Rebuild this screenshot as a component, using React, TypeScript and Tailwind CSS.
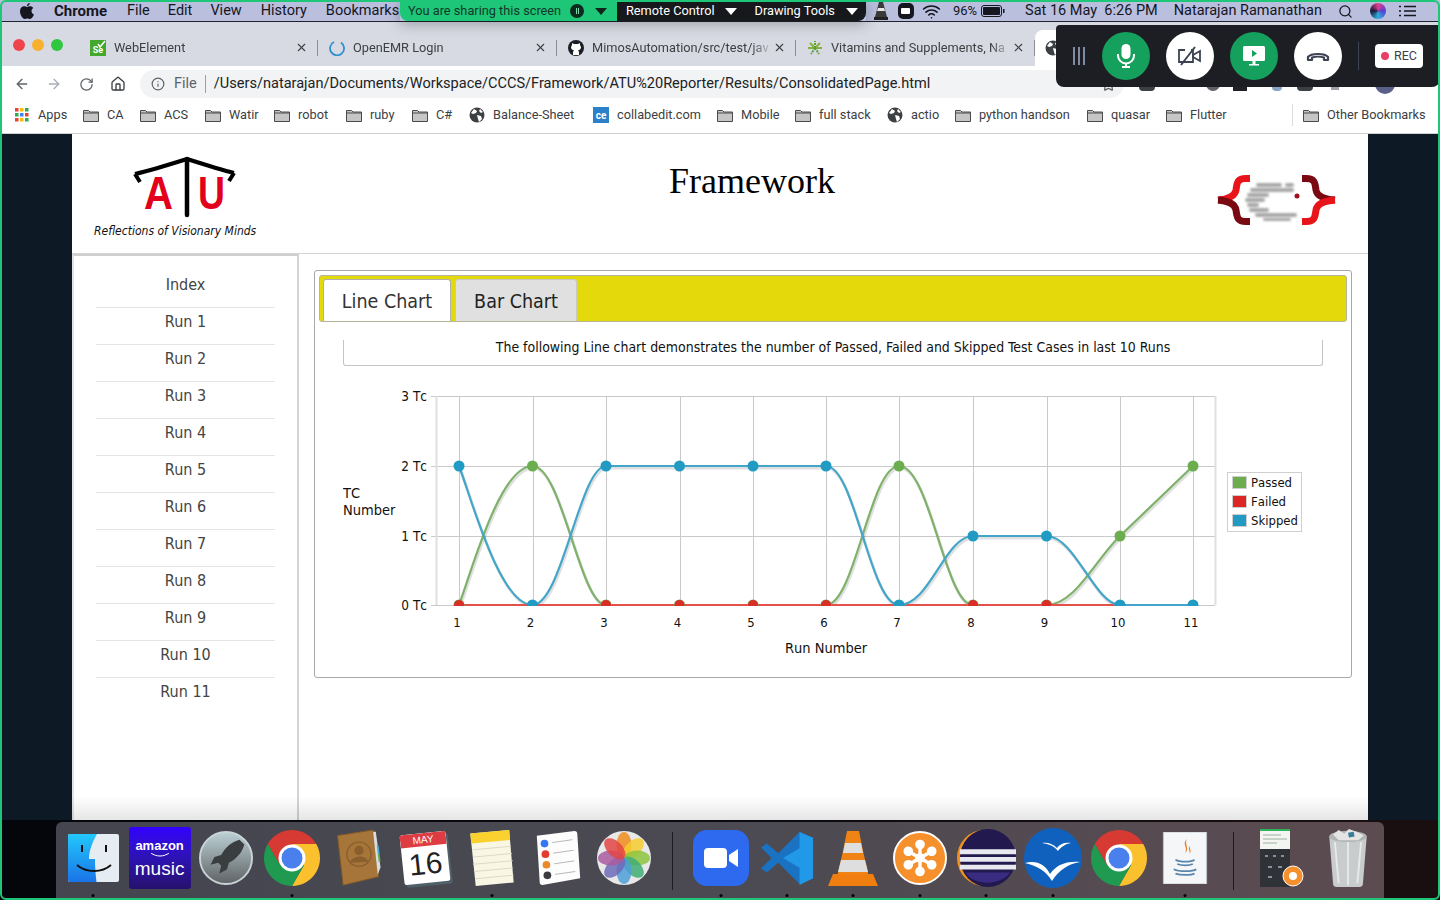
import { ArrowLeft, ArrowRight, Home, Info, RotateCw, Search, Star, Wifi, X } from 'lucide-react';

const pageFont = "font-['DejaVu_Sans_Condensed','DejaVu_Sans',sans-serif]";

const runs = ['Index', 'Run 1', 'Run 2', 'Run 3', 'Run 4', 'Run 5', 'Run 6', 'Run 7', 'Run 8', 'Run 9', 'Run 10', 'Run 11'];

const bookmarks = [
  { label: 'CA', width: 'w-[57px]' },
  { label: 'ACS', width: 'w-[65px]' },
  { label: 'Watir', width: 'w-[69px]' },
  { label: 'robot', width: 'w-[72px]' },
  { label: 'ruby', width: 'w-[66px]' },
  { label: 'C#', width: 'w-[57px]' },
  { label: 'Balance-Sheet', width: 'w-[124px]', icon: 'globe' },
  { label: 'collabedit.com', width: 'w-[124px]', icon: 'ce' },
  { label: 'Mobile', width: 'w-[78px]' },
  { label: 'full stack', width: 'w-[92px]' },
  { label: 'actio', width: 'w-[68px]', icon: 'globe' },
  { label: 'python handson', width: 'w-[132px]' },
  { label: 'quasar', width: 'w-[79px]' },
  { label: 'Flutter', width: 'w-[126px]' },
];

function Folder() {
  return (
    <svg width="16" height="13" viewBox="0 0 16 13" className="shrink-0">
      <path d="M.5 1.5h5l1.5 1.5h8.500v9.500h-15z" fill="#c6c6c6" stroke="#4a4a4a" />
      <path d="M.5 4h15" stroke="#4a4a4a" />
    </svg>
  );
}

function GlobeIcon({ size = 16 }: { size?: number }) {
  return (
    <svg width={size} height={size} viewBox="0 0 16 16" className="shrink-0">
      <circle cx="8" cy="8" r="7.500" fill="#3c4043" />
      <path d="M5 2l3 2-1 2-3 1-2-1zM8 8l4 1 1 3-3 3-1-3zM11 2l3 3-2 1-2-2z" fill="#fff" />
    </svg>
  );
}

function BookmarkBar() {
  return (
    <div className="flex h-[33px] items-center bg-white pb-[3px] pl-[14px] text-[12.75px] text-[#3c4043]">
      <div className="flex w-[69px] items-center gap-2">
        <svg width="16" height="16" viewBox="0 0 16 16" className="shrink-0">
          {[1, 6, 11].map((x, i) =>
            [1, 6, 11].map((y, j) => (
              <rect key={`${i}-${j}`} x={x} y={y} width="3.500" height="3.500" fill={['#ea4335', '#fbbc05', '#34a853', '#4285f4'][(i + j * 2) % 4]} />
            )),
          )}
        </svg>
        <span>Apps</span>
      </div>
      {bookmarks.map((b) => (
        <div key={b.label} className={`flex items-center gap-2 ${b.width}`}>
          {b.icon === 'globe' ? (
            <GlobeIcon />
          ) : b.icon === 'ce' ? (
            <span className="flex h-4 w-4 shrink-0 items-center justify-center bg-[#2a80c9] text-[10px] font-bold text-white">ce</span>
          ) : (
            <Folder />
          )}
          <span className="whitespace-nowrap">{b.label}</span>
        </div>
      ))}
      <div className="mr-[10px] h-[22px] w-px bg-[#dadce0]" />
      <div className="flex items-center gap-2">
        <Folder />
        <span className="whitespace-nowrap">Other Bookmarks</span>
      </div>
    </div>
  );
}

function Tab({ title, children }: { title: string; children: React.ReactNode }) {
  return (
    <div className="flex h-[16px] w-[239px] items-center border-r border-[#8a8d94] pl-[11px] pr-[9px] text-[12.75px] text-[#3c4043]">
      <span className="flex w-4 shrink-0 justify-center">{children}</span>
      <span className="ml-[8px] flex-1 whitespace-nowrap [mask-image:linear-gradient(to_right,black_88%,transparent)]">{title}</span>
      <X size={13} strokeWidth={2} className="shrink-0 text-[#3c4043]" />
    </div>
  );
}

function TabStrip() {
  return (
    <div className="flex h-[44px] bg-[#d7dae3]">
      <div className="flex w-[79px] items-center gap-[7px] pl-[13px] pt-[1px]">
        <span className="h-3 w-3 rounded-full bg-[#f0444c]" />
        <span className="h-3 w-3 rounded-full bg-[#f8b02f]" />
        <span className="h-3 w-3 rounded-full bg-[#2fc640]" />
      </div>
      <div className="flex items-center pt-[7px]">
        <Tab title="WebElement">
          <span className="relative flex h-4 w-4 items-end justify-center bg-[#43a82c] text-[9px] font-bold leading-[11px] text-white">
            Se
            <svg width="9" height="8" viewBox="0 0 9 8" className="absolute right-0 top-0">
              <path d="M1 4l2 3 5-6" fill="none" stroke="#fff" strokeWidth="1.500" />
            </svg>
          </span>
        </Tab>
        <Tab title="OpenEMR Login">
          <svg width="16" height="16" viewBox="0 0 16 16">
            <path d="M5 2a7 7 0 1 0 7 .5" fill="none" stroke="#2f8fd0" strokeWidth="1.800" />
          </svg>
        </Tab>
        <Tab title="MimosAutomation/src/test/jav">
          <svg width="16" height="16" viewBox="0 0 16 16">
            <circle cx="8" cy="8" r="8" fill="#1b1f23" />
            <path d="M5 15v-3l1-1.500c-2-.5-3-1.500-3-3.500l1-2V3l2 1h4l2-1v2l1 2c0 2-1 3-3 3.500l1 1.500v3z" fill="#fff" />
          </svg>
        </Tab>
        <Tab title="Vitamins and Supplements, Na">
          <svg width="16" height="16" viewBox="0 0 16 16" fill="none" strokeWidth="2">
            <path d="M8 8L3 3M8 8l5-5M8 8L1 8M8 8h7" stroke="#86b03a" />
            <path d="M8 8L4 14M8 8l4 6M8 8V1" stroke="#5a9e3a" strokeDasharray="2 1" />
          </svg>
        </Tab>
      </div>
      <div className="mt-[8px] flex w-[190px] items-center rounded-t-lg bg-white pl-[10px]">
        <GlobeIcon />
      </div>
    </div>
  );
}

function Toolbar() {
  return (
    <div className="flex h-[34px] items-center bg-white pl-[14px] pt-[2px] text-[#5f6368]">
      <ArrowLeft size={16} />
      <ArrowRight size={16} className="ml-[16px] text-[#a9adb3]" />
      <RotateCw size={15} className="ml-[17px]" />
      <Home size={16} className="ml-[16px] text-[#3c4043]" />
      <div className="ml-[14px] flex h-[28px] w-[984px] items-center rounded-full bg-[#f1f3f4] pl-[11px] text-[14.55px]">
        <Info size={14} />
        <span className="ml-[9px] text-[#5f6368]">File</span>
        <span className="ml-[8px] h-[18px] w-px bg-[#9aa0a6]" />
        <span className="ml-[8px] whitespace-nowrap text-[#202124]">/Users/natarajan/Documents/Workspace/CCCS/Framework/ATU%20Reporter/Results/ConsolidatedPage.html</span>
        <Star size={15} className="ml-auto mr-[8px] text-[#5f6368]" />
      </div>
      <span className="ml-[15px] h-[14px] w-[16px] rounded-sm bg-[#3c4043]" />
      <span className="ml-[23px] h-[4px] w-[4px] rounded-full bg-[#9aa0a6]" />
      <span className="ml-[24px] h-[14px] w-[14px] rounded-full bg-[#5f6368]" />
      <span className="ml-[13px] h-[14px] w-[14px] bg-[#202124]" />
      <span className="ml-[25px] h-[14px] w-[10px] rounded-sm bg-[#8aa4c8]" />
      <span className="ml-[15px] h-[14px] w-[16px] rounded-sm bg-[#3c4043]" />
      <span className="ml-[18px] h-[12px] w-[8px] bg-[#a0a4aa]" />
      <span className="ml-[36px] h-[20px] w-[20px] rounded-full bg-[#5a5f8a]" />
      <span className="ml-[21px] h-[4px] w-[4px] rounded-full bg-[#5f6368]" />
    </div>
  );
}

function MenuBar() {
  return (
    <div className="flex h-[22px] items-center border-b border-[#20222e] bg-[#b9bfdd] pt-[1px] font-['Roboto',sans-serif] text-[14.5px] text-[#15161f]">
      <svg width="14" height="16" viewBox="0 0 14 16" className="ml-[20px]">
        <path d="M9.800 0c.1 1.300-1.100 3-2.900 3C6.800 1.500 8.200.2 9.800 0zM7 4c.8 0 1.700-.7 3.100-.7 1.200 0 2.500.6 3.200 1.800-2.700 1.600-2.200 5.300.7 6.400-.8 2-2.400 4.500-3.900 4.500-1 0-1.500-.6-2.700-.6s-1.800.6-2.700.6C2.700 16 0 11.700 0 8.300 0 5 2.100 3.300 4 3.300 5.300 3.300 6.200 4 7 4z" fill="#15161f" />
      </svg>
      <span className="ml-[20px] text-[15px] font-bold">Chrome</span>
      <span className="ml-[20px]">File</span>
      <span className="ml-[18px]">Edit</span>
      <span className="ml-[18px]">View</span>
      <span className="ml-[19px]">History</span>
      <span className="ml-[19px]">Bookmarks</span>
      <div className="ml-auto flex items-center pr-[24px]">
        <svg width="14" height="18" viewBox="0 0 14 18">
          <path d="M5 0h4l4 15H1z" fill="#3a3a3a" />
          <path d="M4 6h6l1 3H3z" fill="#e8e8e8" />
          <path d="M0 15h14v3H0z" fill="#222" />
        </svg>
        <span className="ml-[10px] flex h-4 w-4 items-center justify-center rounded-[5px] bg-[#15161f]">
          <span className="h-[6px] w-[9px] rounded-[1px] bg-white" />
        </span>
        <Wifi size={19} className="ml-[8px]" />
        <span className="ml-[12px] text-[13px]">96%</span>
        <svg width="24" height="12" viewBox="0 0 24 12" className="ml-[4px]">
          <rect x=".5" y=".5" width="20" height="11" rx="2.500" fill="none" stroke="#15161f" />
          <rect x="2" y="2" width="17" height="8" rx="1" fill="#15161f" />
          <rect x="22" y="4" width="1.500" height="4" fill="#15161f" />
        </svg>
        <span className="ml-[20px]">Sat 16 May&nbsp;&nbsp;6:26 PM</span>
        <span className="ml-[16px]">Natarajan Ramanathan</span>
        <Search size={15} className="ml-[16px]" />
        <span className="ml-[17px] h-4 w-4 rounded-full bg-[conic-gradient(#e23f8e,#5a3fd0,#2fb0e0,#1a1a3a,#e23f8e)]" />
        <svg width="17" height="12" viewBox="0 0 17 12" className="ml-[13px]" stroke="#15161f" strokeWidth="1.500">
          <path d="M0 1.500h2M5 1.500h12M0 6h2M5 6h12M0 10.500h2M5 10.500h12" />
        </svg>
      </div>
    </div>
  );
}

function ShareBar() {
  return (
    <div className="absolute left-[400px] top-0 flex h-[21px] shadow-[0_3px_14px_rgba(0,0,0,0.28)] font-['Roboto',sans-serif] text-[12.75px]">
      <div className="flex w-[217px] items-center rounded-bl-lg bg-[#1ec677] pl-[8px] pt-[1px] text-[#14382a]">
        <span className="whitespace-nowrap">You are sharing this screen</span>
        <span className="ml-[9px] flex h-[14px] w-[14px] items-center justify-center gap-px rounded-full bg-[#0c2a1e]">
          <span className="h-[6px] w-px bg-[#7fd9ae]" />
          <span className="h-[6px] w-px bg-[#7fd9ae]" />
        </span>
        <span className="ml-[11px] h-0 w-0 border-x-[6px] border-t-[7px] border-x-transparent border-t-[#10241b]" />
      </div>
      <div className="flex w-[249px] items-center rounded-br-lg bg-[#17181b] pl-[9px] pt-[1px] text-white">
        <span className="whitespace-nowrap">Remote Control</span>
        <span className="ml-[10px] h-0 w-0 border-x-[6px] border-t-[7px] border-x-transparent border-t-white" />
        <span className="ml-[18px] whitespace-nowrap">Drawing Tools</span>
        <span className="ml-[11px] h-0 w-0 border-x-[6px] border-t-[7px] border-x-transparent border-t-white" />
      </div>
    </div>
  );
}

function MeetBar() {
  return (
    <div className="absolute left-[1056px] top-[25px] flex h-[62px] w-[384px] items-center rounded-b-lg rounded-tl-sm bg-[#1c1e23] pl-[17px]">
      <div className="flex gap-[3px]">
        <span className="h-[18px] w-[2px] bg-[#7f8ba3]" />
        <span className="h-[18px] w-[2px] bg-[#7f8ba3]" />
        <span className="h-[18px] w-[2px] bg-[#7f8ba3]" />
      </div>
      <button className="ml-[17px] flex h-[48px] w-[48px] items-center justify-center rounded-full bg-[#16a05d]">
        <svg width="20" height="24" viewBox="0 0 20 24">
          <rect x="5.500" y="0" width="9" height="15" rx="4.500" fill="#fff" />
          <path d="M2 10v1.500a8 8 0 0 0 16 0V10" fill="none" stroke="#fff" strokeWidth="2" />
          <path d="M10 19.500V22M6 23h8" stroke="#fff" strokeWidth="2" />
        </svg>
      </button>
      <button className="ml-[16px] flex h-[48px] w-[48px] items-center justify-center rounded-full bg-white">
        <svg width="24" height="20" viewBox="0 0 24 20" fill="none" stroke="#3c4352" strokeWidth="1.800">
          <path d="M7 4H1v12h14V4h-2" />
          <path d="M15 9l7-4v10l-7-4z" />
          <path d="M17 1L3 19" strokeWidth="2" />
        </svg>
      </button>
      <button className="ml-[16px] flex h-[48px] w-[48px] items-center justify-center rounded-full bg-[#16a05d]">
        <svg width="24" height="22" viewBox="0 0 24 22">
          <rect x="1" y="1" width="22" height="15" rx="1.500" fill="#fff" />
          <path d="M10 5l5 3.500-5 3.500z" fill="#16a05d" />
          <rect x="10.500" y="16" width="3" height="3" fill="#fff" />
          <rect x="7" y="19" width="10" height="1.500" fill="#fff" />
        </svg>
      </button>
      <button className="ml-[16px] flex h-[48px] w-[48px] items-center justify-center rounded-full bg-white">
        <svg width="24" height="12" viewBox="0 0 24 12" fill="none" stroke="#3c4352" strokeWidth="2.200">
          <path d="M2 10V7c3-4 17-4 20 0v3h-4V7.500c-3-1-9-1-12 0V10z" strokeLinejoin="round" />
        </svg>
      </button>
      <span className="ml-[16px] h-[28px] w-px bg-[#3c4352]" />
      <div className="ml-[16px] flex h-[24px] w-[48px] items-center justify-center gap-[5px] rounded-[4px] bg-white font-['Roboto',sans-serif] text-[12.5px] text-[#3c4043]">
        <span className="h-2 w-2 rounded-full bg-[#ea3f62]" />
        <span>REC</span>
      </div>
    </div>
  );
}

function AtuLogo() {
  return (
    <svg width="110" height="62" viewBox="0 0 110 62">
      <path d="M3 18C20 14 36 9 55 3C74 9 90 14 102 17" fill="none" stroke="#000" strokeWidth="4" />
      <path d="M3 18l5 8M102 17l-5 8" fill="none" stroke="#000" strokeWidth="4" />
      <path d="M55 3V59" stroke="#000" strokeWidth="4.500" strokeLinecap="round" />
      <text x="12" y="53" textLength="29" lengthAdjust="spacingAndGlyphs" fill="#e2001a" fontFamily="'Liberation Sans',sans-serif" fontWeight="700" fontSize="46">A</text>
      <text x="66" y="53" textLength="27" lengthAdjust="spacingAndGlyphs" fill="#e2001a" fontFamily="'Liberation Sans',sans-serif" fontWeight="700" fontSize="46">U</text>
    </svg>
  );
}

function CcLogo() {
  return (
    <svg width="120" height="50" viewBox="0 0 120 50">
      <defs>
        <filter id="blurLines">
          <feGaussianBlur stdDeviation="0.800" />
        </filter>
      </defs>
      <g fill="none" strokeWidth="7">
        <path d="M33 3.500H29C20 3.500 20 8 19 15C18 21 12 24 1 25" stroke="#e8141a" />
        <path d="M1 25C12 26 18 29 19 35C20 42 20 46.500 29 46.500H33" stroke="#7a0a12" />
        <path d="M85 3.500H89C98 3.500 98 8 99 15C100 21 106 24 118 25" stroke="#7a0a12" />
        <path d="M118 25C106 26 100 29 99 35C98 42 98 46.500 89 46.500H85" stroke="#e8141a" />
      </g>
      <g filter="url(#blurLines)" fill="#a8a8a8">
        <rect x="39" y="8" width="26" height="4" rx="2" />
        <rect x="68" y="8" width="9" height="4" rx="2" />
        <rect x="33" y="13" width="44" height="4" rx="2" />
        <rect x="30" y="18" width="22" height="4" rx="2" />
        <rect x="28" y="23" width="20" height="4" rx="2" />
        <rect x="30" y="28" width="12" height="4" rx="2" />
        <rect x="32" y="33" width="20" height="4" rx="2" />
        <rect x="38" y="38" width="42" height="4" rx="2" />
        <rect x="46" y="43" width="28" height="3" rx="1.500" />
      </g>
      <circle cx="80" cy="21" r="2.500" fill="#a01020" />
    </svg>
  );
}

function Chart() {
  const xs = [459, 532.5, 606, 679.5, 753, 826, 899, 973, 1046.5, 1120, 1193];
  const passed = 'M459 605C472 570 500 466 532.5 466C562 466 580 605 606 605L826 605C855 605 870 466 899 466C930 466 945 605 973 605L1046.5 605C1075 605 1095 560 1120 536L1193 466';
  const skipped = 'M459 466C472 500 500 605 532.5 605C562 605 580 466 606 466L826 466C855 466 870 605 899 605C930 605 945 536 973 536L1046.5 536C1075 536 1095 605 1120 605L1193 605';
  const yPassed = [605, 466, 605, 605, 605, 605, 466, 605, 605, 536, 466];
  const ySkipped = [466, 605, 466, 466, 466, 466, 605, 536, 536, 605, 605];
  const labels = "'DejaVu Sans Condensed','DejaVu Sans',sans-serif";
  return (
    <svg width="980" height="285" viewBox="343 380 980 285" fontFamily={labels} fill="#111" className="[font-kerning:none]">
      <defs>
        <clipPath id="plot">
          <rect x="437" y="390" width="778" height="216" />
        </clipPath>
      </defs>
      <g stroke="#c9c9c9" strokeWidth="1">
        {[396.5, 466.5, 536.5, 605.5].map((y) => (
          <path key={y} d={`M431 ${y}H1215`} />
        ))}
        <path d="M436.5 396V605M1215.500 396V605" strokeWidth="2" stroke="#e0e0e0" />
        {xs.map((x) => (
          <path key={x} d={`M${Math.round(x) + 0.5} 396V606`} />
        ))}
      </g>
      <g clipPath="url(#plot)" fill="none">
        <path d={passed} stroke="#000" strokeOpacity="0.12" strokeWidth="3" transform="translate(1 2)" />
        <path d={skipped} stroke="#000" strokeOpacity="0.12" strokeWidth="3" transform="translate(1 2)" />
        <path d={passed} stroke="#7eb26a" strokeWidth="2.200" />
        <path d="M459 605H1120" stroke="#e6504a" strokeWidth="2" />
        <path d={skipped} stroke="#43a6c9" strokeWidth="2.200" />
        {xs.map((x, i) => (
          <circle key={`g${x}`} cx={x} cy={yPassed[i]} r="5.500" fill="#6bad4f" />
        ))}
        {xs.map((x) => (
          <circle key={`r${x}`} cx={x} cy="605" r="5" fill="#d92d27" />
        ))}
        {xs.map((x, i) => (
          <circle key={`b${x}`} cx={x} cy={ySkipped[i]} r="5.500" fill="#219bc4" />
        ))}
      </g>
      <g fontSize="13.500" textAnchor="end">
        <text x="427" y="401">3 Tc</text>
        <text x="427" y="471">2 Tc</text>
        <text x="427" y="541">1 Tc</text>
        <text x="427" y="610">0 Tc</text>
      </g>
      <g fontSize="13" textAnchor="middle">
        {xs.map((x, i) => (
          <text key={x} x={x - 2} y="627">{i + 1}</text>
        ))}
      </g>
      <text x="343" y="498" fontSize="14.500">TC</text>
      <text x="343" y="515" fontSize="14.500">Number</text>
      <text x="826" y="653" fontSize="14.500" textAnchor="middle">Run Number</text>
      <rect x="1227.500" y="472.500" width="74" height="59" fill="#fff" stroke="#cfcfcf" />
      {[
        { y: 475, label: 'Passed', color: '#6bad4f' },
        { y: 494, label: 'Failed', color: '#dc2626' },
        { y: 513, label: 'Skipped', color: '#219bc4' },
      ].map((l) => (
        <g key={l.label}>
          <rect x="1232.500" y={l.y + 1.5} width="14" height="12" fill={l.color} stroke="#cfcfcf" />
          <text x="1251" y={l.y + 12} fontSize="13">{l.label}</text>
        </g>
      ))}
    </svg>
  );
}

function ChromeIcon() {
  return (
    <svg width="58" height="58" viewBox="-29 -29 58 58">
      <path d="M0 -14L24.250 -14A28 28 0 0 0 -24.250 -14L-12.120 7Z" fill="#d63a33" />
      <path d="M12.120 7L0 28A28 28 0 0 0 24.250 -14L0 -14Z" fill="#fbc02d" />
      <path d="M-12.120 7L-24.250 -14A28 28 0 0 0 0 28L12.120 7Z" fill="#1f9a50" />
      <circle r="13.500" fill="#fff" />
      <circle r="10.500" fill="#4a80ee" />
    </svg>
  );
}

function DockIcon({ children, dot }: { children: React.ReactNode; dot?: boolean }) {
  return (
    <div className="relative flex h-full w-[66.4px] shrink-0 items-center justify-center pb-[4px]">
      {children}
      {dot && <span className="absolute bottom-[1px] left-1/2 h-[3px] w-[3px] -translate-x-1/2 rounded-full bg-black" />}
    </div>
  );
}

function Dock() {
  return (
    <div className="flex h-[76px] w-[1328px] items-center rounded-t-md bg-gradient-to-r from-[#44454f] via-[#4b4a52] to-[#5c4b50] pl-[4px]">
      <DockIcon dot>
        <svg width="51" height="48" viewBox="0 0 51 48">
          <defs>
            <linearGradient id="finderBlue" x1="0" y1="0" x2="0" y2="1">
              <stop offset="0" stopColor="#22c8fb" />
              <stop offset="1" stopColor="#1a74e8" />
            </linearGradient>
          </defs>
          <rect x="0" y="0" width="51" height="48" rx="2" fill="#e6edf2" />
          <path d="M2 0h27c-5 9-8 17-8 25h6c0 8 .5 15 1.500 23H2a2 2 0 0 1-2-2V2a2 2 0 0 1 2-2z" fill="url(#finderBlue)" />
          <rect x="13" y="11" width="2" height="7" fill="#111" />
          <rect x="37" y="11" width="2" height="7" fill="#111" />
          <path d="M9 31c9 8 25 8 34 0" fill="none" stroke="#111" strokeWidth="1.800" />
        </svg>
      </DockIcon>
      <DockIcon>
        <div className="flex h-[62px] w-[62px] flex-col items-center justify-center rounded-[3px] bg-gradient-to-b from-[#3300ff] to-[#26116e] font-['Liberation_Sans',sans-serif] text-white">
          <span className="text-[13px] font-bold leading-[14px]">amazon</span>
          <svg width="20" height="4" viewBox="0 0 20 4">
            <path d="M1 0c5 4 13 4 18 0" fill="none" stroke="#fff" />
          </svg>
          <span className="mt-[3px] text-[19px] leading-[18px]">music</span>
        </div>
      </DockIcon>
      <DockIcon dot={false}>
        <svg width="54" height="54" viewBox="0 0 56 56">
          <defs>
            <linearGradient id="rocketBg" x1="0" y1="0" x2="0" y2="1">
              <stop offset="0" stopColor="#bcd0d6" />
              <stop offset="1" stopColor="#5f6365" />
            </linearGradient>
          </defs>
          <circle cx="28" cy="28" r="27" fill="url(#rocketBg)" stroke="#c8d4d8" strokeWidth="2" />
          <path d="M42 9c-8 2-15 8-19 16l-7 2-4 8 8-2 3 3-2 8 8-4 2-7c8-4 14-11 16-19z" fill="#3b3e41" />
        </svg>
      </DockIcon>
      <DockIcon dot>
        <ChromeIcon />
      </DockIcon>
      <DockIcon>
        <svg width="50" height="58" viewBox="0 0 50 62">
          <path d="M2 7L40 1l6 50-38 9z" fill="#a6753a" stroke="#7f5727" />
          <path d="M40 3l3 0 5 38-3 8z" fill="#dcdcdc" />
          <path d="M44 18l2 0 1 9-2 0z" fill="#43b2d8" />
          <path d="M45 27l2 0 1 8-2 0z" fill="#6ab04c" />
          <circle cx="25" cy="27" r="13" fill="none" stroke="#8a5f2d" strokeWidth="1.500" />
          <circle cx="25" cy="23" r="5" fill="#8a5f2d" />
          <path d="M15 36c3-8 17-9 20-1z" fill="#8a5f2d" />
        </svg>
      </DockIcon>
      <DockIcon>
        <div className="flex h-[50px] w-[46px] rotate-[-6deg] flex-col overflow-hidden rounded-[2px] bg-white shadow-[2px_3px_0_#50606a]">
          <span className="h-[13px] bg-[#dd3c42] text-center font-['Liberation_Sans',sans-serif] text-[10px] leading-[13px] text-white">MAY</span>
          <span className="text-center font-['Liberation_Sans',sans-serif] text-[30px] leading-[36px] text-[#222]">16</span>
        </div>
      </DockIcon>
      <DockIcon dot>
        <svg width="50" height="56" viewBox="0 0 50 62">
          <path d="M1 4L44 0l5 58-42 4z" fill="#f9f6e4" />
          <path d="M1 4L44 0l1 11-43 4z" fill="#fbd12f" />
          <path d="M3 22l43-4M4 30l43-4M4 38l44-4M5 46l43-4M6 54l43-4" stroke="#d9d6c6" />
        </svg>
      </DockIcon>
      <DockIcon>
        <svg width="46" height="54" viewBox="0 0 46 56">
          <path d="M1 5L40 0a3 3 0 0 1 3 3l3 46-39 7a3 3 0 0 1-3-3z" fill="#fdfdfd" />
          <circle cx="9" cy="13" r="4" fill="#3478f6" />
          <circle cx="10" cy="24" r="4" fill="#e23b30" />
          <circle cx="11" cy="35" r="4" fill="#ea8a2d" />
          <circle cx="12" cy="46" r="4" fill="#3a3c42" />
          <path d="M17 12l21-3M18 23l21-3M19 34l21-3M20 45l21-3" stroke="#b5b5b5" />
        </svg>
      </DockIcon>
      <DockIcon>
        <svg width="54" height="54" viewBox="-27 -27 54 54">
          <circle r="27" fill="#e8e8e8" />
          {['#f08c1e', '#f5cd2e', '#8cc63f', '#3fae74', '#4f9fd8', '#6b6bb8', '#a95aa0', '#e34545'].map((c, i) => (
            <ellipse key={c} cx="0" cy="-13" rx="7.500" ry="13" fill={c} opacity="0.850" transform={`rotate(${i * 45})`} />
          ))}
        </svg>
      </DockIcon>
      <div className="flex h-full w-[30px] shrink-0 justify-center pt-[10px]">
        <span className="h-[58px] w-px bg-[#1c1c20]" />
      </div>
      <DockIcon dot>
        <div className="flex h-[56px] w-[56px] items-center justify-center rounded-[14px] bg-[#2d6af0]">
          <svg width="34" height="22" viewBox="0 0 34 22">
            <rect x="0" y="1" width="23" height="20" rx="4" fill="#fff" />
            <path d="M25 8l9-6v18l-9-6z" fill="#fff" />
          </svg>
        </div>
      </DockIcon>
      <DockIcon dot>
        <svg width="56" height="54" viewBox="0 0 56 56">
          <path d="M41 1L19 23 7 13 1 17l11 11L1 39l6 4 12-10 22 22 14-6V7z" fill="#1a73c2" />
          <path d="M41 1l14 6v42l-14 7V38L24 28 41 18z" fill="#2298e8" />
        </svg>
      </DockIcon>
      <DockIcon dot>
        <svg width="50" height="56" viewBox="0 0 50 56">
          <path d="M19 1h12l4 20 6 26H9l6-26z" fill="#ef8414" />
          <path d="M17 13h16l2 10H15z" fill="#dedede" />
          <path d="M13 30h24l3 12H10z" fill="#dedede" />
          <path d="M5 44h40l5 12H0z" fill="#f07f10" />
        </svg>
      </DockIcon>
      <DockIcon dot>
        <svg width="54" height="54" viewBox="-28 -28 56 56">
          <circle r="27" fill="#f5902c" stroke="#fff" strokeWidth="2" />
          <circle r="5" fill="#fff" />
          {[0, 60, 120, 180, 240, 300].map((a) => (
            <g key={a} transform={`rotate(${a})`}>
              <path d="M0 0V-12" stroke="#fff" strokeWidth="3.500" />
              <circle cy="-14" r="5" fill="#fff" />
            </g>
          ))}
        </svg>
      </DockIcon>
      <DockIcon dot>
        <svg width="62" height="60" viewBox="0 0 62 62">
          <ellipse cx="29" cy="31" rx="28" ry="29" fill="#f0901e" />
          <ellipse cx="33" cy="31" rx="29" ry="30" fill="#221a4e" />
          <path d="M10 46c8 14 36 14 46 0z" fill="#3a2c80" />
          <path d="M4 22h58v5H4zM4 30h58v5H4zM4 38h58v5H4z" fill="#e8e8f0" />
        </svg>
      </DockIcon>
      <DockIcon dot>
        <svg width="58" height="60" viewBox="0 0 58 60">
          <ellipse cx="29" cy="30" rx="29" ry="30" fill="#1061be" />
          <path d="M18 15c6-1 11 1 15 5 3-4 7-6 14-5-6 1-10 4-13 8-4-5-9-7-16-8z" fill="#fff" />
          <path d="M1 35c11-3 20 1 25 11 6-8 14-13 30-12-12 2-21 8-28 19-6-10-14-15-27-18z" fill="#fff" />
        </svg>
      </DockIcon>
      <DockIcon>
        <ChromeIcon />
      </DockIcon>
      <DockIcon dot>
        <svg width="50" height="52" viewBox="0 0 50 60">
          <rect x="0" y="0" width="50" height="60" fill="#f4f6f8" stroke="#b9c2cc" />
          <path d="M27 8c-6 6 2 10-2 16 6-4-1-10 2-16zM31 16c-4 3 1 6-1 9 4-3-1-6 1-9z" fill="#e8822a" />
          <path d="M14 32c5 3 18 3 22 0M16 37c5 2 14 2 18 0M12 43c6 3 22 3 26 0M14 48c6 2 18 2 22 0" fill="none" stroke="#5b86ab" strokeWidth="2" />
        </svg>
      </DockIcon>
      <div className="flex h-full w-[30px] shrink-0 justify-center pt-[10px]">
        <span className="h-[58px] w-px bg-[#1c1c20]" />
      </div>
      <DockIcon>
        <svg width="44" height="58" viewBox="0 0 44 58">
          <rect x="0" y="0" width="30" height="58" fill="#2f3338" />
          <rect x="0" y="0" width="30" height="2" fill="#2db45a" />
          <rect x="0" y="2" width="30" height="18" fill="#f2f5f2" />
          <path d="M3 6h18M3 10h24M3 14h14" stroke="#9ab09a" />
          <path d="M5 27h3M13 27h3M21 27h3M8 38h4M18 38h4M8 48h4" stroke="#8a8f96" strokeWidth="2" />
          <circle cx="33" cy="47" r="10" fill="#f5902c" stroke="#fff" />
          <circle cx="33" cy="47" r="4" fill="#fff" />
        </svg>
      </DockIcon>
      <DockIcon>
        <svg width="44" height="58" viewBox="0 0 44 62">
          <path d="M2 8h40l-4 50a4 4 0 0 1-4 4H10a4 4 0 0 1-4-4z" fill="#c8cccc" />
          <path d="M8 14l4 44M22 14v46M36 14l-4 44" stroke="#e8eaea" strokeWidth="2" />
          <ellipse cx="22" cy="8" rx="20" ry="6" fill="#b0b4b4" />
          <path d="M6 6l6-5 6 4 5-5 8 3 8 4-6 5H12z" fill="#e4e4e4" />
          <path d="M22 4l6-1 1 5-6 1z" fill="#3a7a9a" />
        </svg>
      </DockIcon>
    </div>
  );
}

export default function App() {
  return (
    <div className="relative flex h-[900px] w-[1440px] flex-col overflow-hidden bg-[#07080f] font-['Roboto',sans-serif]">
      <MenuBar />
      <TabStrip />
      <Toolbar />
      <BookmarkBar />

      {/* Page in the browser window */}
      <div className="flex h-[687px] justify-center border-t border-[#d0d0d0] bg-[#0d1a25]">
        <div className={`relative flex w-[1296px] flex-col bg-white ${pageFont}`}>
          <header className="flex h-[120px] border-b border-[#d4d4d4]">
            <div className="flex w-[227px] flex-col items-center pt-[22px]">
              <div className="ml-[2px]">
                <AtuLogo />
              </div>
              <p className="mt-[5px] ml-[22px] self-start text-[12px] font-medium italic leading-[16px] text-[#111]">Reflections of Visionary Minds</p>
            </div>
            <div className="w-[906px] pt-[27px] text-center font-['Liberation_Serif',serif] text-[36px] leading-[40px] text-black">Framework</div>
            <div className="ml-[12px] pt-[41px]">
              <CcLogo />
            </div>
          </header>

          <div className="flex flex-1">
            <aside className="w-[227px] shrink-0 border-x-2 border-t-2 border-l-[#e4e4e4] border-r-[#d4d4d4] border-t-[#cfcfcf] pl-[22px] pr-[22px] pt-[15px]">
              {runs.map((run, i) => (
                <div key={run} className={`h-[37px] pt-[4px] text-center text-[16px] leading-[20px] text-[#444] ${i < runs.length - 1 ? 'border-b border-[#e4e4e4]' : ''}`}>
                  {run}
                </div>
              ))}
            </aside>

            <main className="flex-1 pl-[15px] pr-[16px] pt-[16px]">
              <div className="h-[408px] rounded-[3px] border border-[#a8a8a8] p-[4px]">
                <div className="flex h-[47px] items-end gap-[4px] rounded-[3px] border border-[#b5b59a] bg-[#e4d90a] pl-[3px]">
                  <div className="flex h-[42px] w-[128px] items-center justify-center rounded-t-[3px] border border-b-0 border-[#b0b0b0] bg-white pt-[2px] text-[19.5px] text-[#333]">Line Chart</div>
                  <div className="flex h-[42px] w-[122px] items-center justify-center rounded-t-[3px] border border-b-0 border-[#c8c8c8] bg-[#e0e0e0] pt-[2px] text-[19.5px] text-[#222]">Bar Chart</div>
                </div>
                <div className="mx-[24px] mt-[18px] flex h-[26px] items-center justify-center rounded-b-[3px] border border-t-0 border-[#c4c4c4] pb-[10px] text-[13.95px] text-[#111]">
                  The following Line chart demonstrates the number of Passed, Failed and Skipped Test Cases in last 10 Runs
                </div>
                <div className="ml-[24px] mt-[14px]">
                  <Chart />
                </div>
              </div>
            </main>
          </div>
          <div className="absolute inset-x-0 bottom-0 h-[24px] bg-gradient-to-b from-transparent to-black/10" />
        </div>
      </div>

      {/* Desktop strip with the dock */}
      <div className="flex flex-1 bg-gradient-to-r from-[#05060c] via-[#0a0a10] to-[#1a0f10] pl-[56px] pt-[2px]">
        <Dock />
      </div>

      <ShareBar />
      <MeetBar />
      <div className="pointer-events-none absolute inset-0 rounded-[6px] border-2 border-[#1ec677]" />
    </div>
  );
}
